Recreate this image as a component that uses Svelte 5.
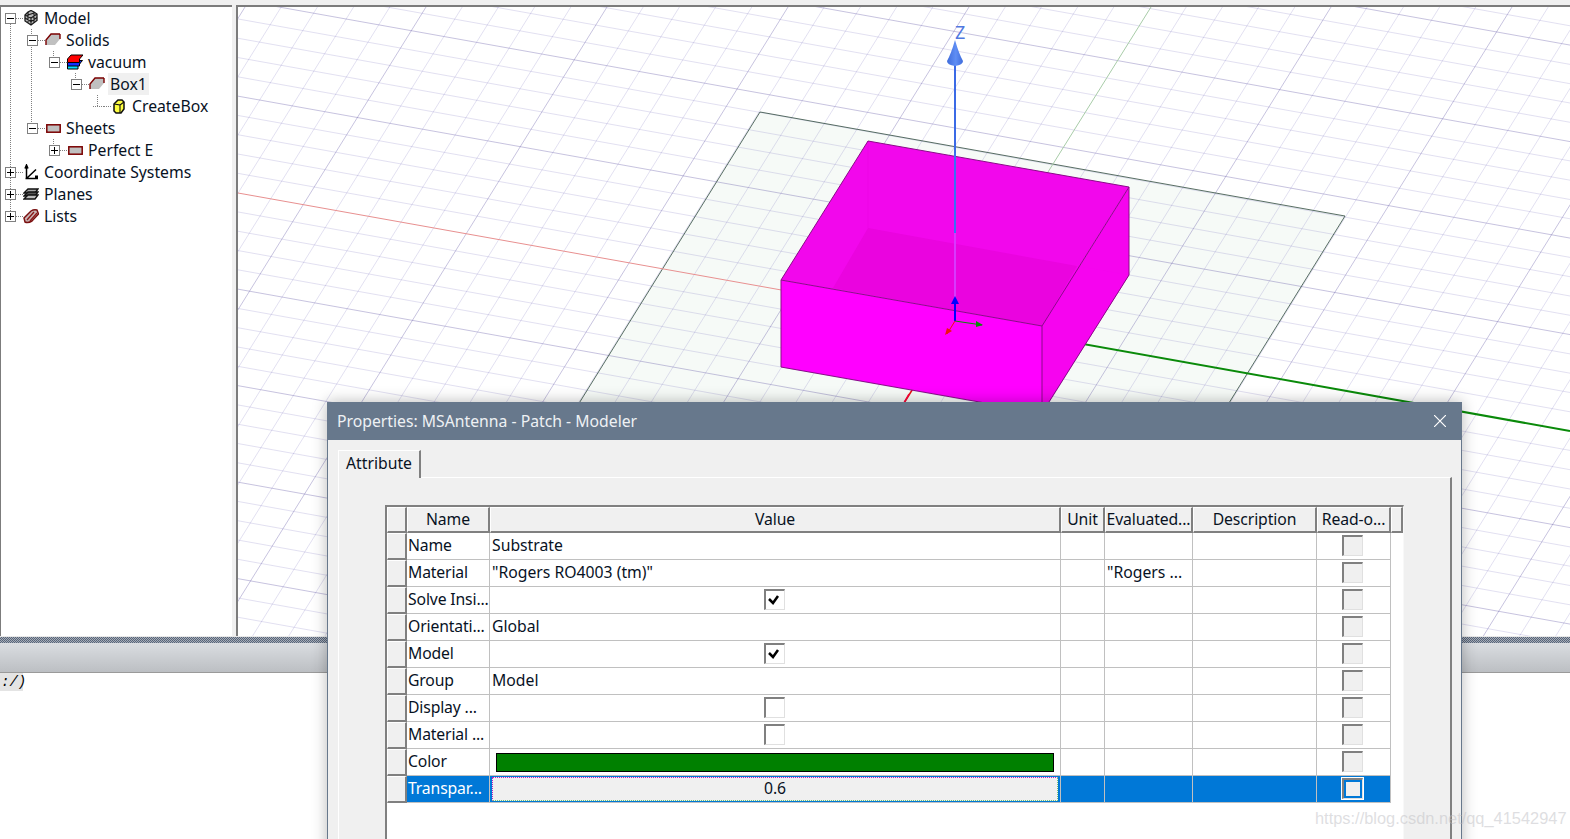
<script lang="ts">
  interface TreeNode {
    label: string;
    depth: number;
    icon: string;
    toggle: string;
    active?: boolean;
  }

  const tree: TreeNode[] = [
    { label: 'Model', depth: 0, icon: 'model', toggle: 'minus' },
    { label: 'Solids', depth: 1, icon: 'solid', toggle: 'minus' },
    { label: 'vacuum', depth: 2, icon: 'material', toggle: 'minus' },
    { label: 'Box1', depth: 3, icon: 'solid', toggle: 'minus', active: true },
    { label: 'CreateBox', depth: 4, icon: 'create', toggle: '' },
    { label: 'Sheets', depth: 1, icon: 'sheet', toggle: 'minus' },
    { label: 'Perfect E', depth: 2, icon: 'sheet', toggle: 'plus' },
    { label: 'Coordinate Systems', depth: 0, icon: 'coords', toggle: 'plus' },
    { label: 'Planes', depth: 0, icon: 'planes', toggle: 'plus' },
    { label: 'Lists', depth: 0, icon: 'lists', toggle: 'plus' },
  ];

  const guides = [
    [10.5, 24, 216],
    [31.5, 29, 128],
    [53.5, 51, 62],
    [53.5, 139, 150],
    [75.5, 73, 84],
    [97.5, 95, 106],
  ];

  const columns = [
    { label: 'Name' },
    { label: 'Value' },
    { label: 'Unit' },
    { label: 'Evaluated...' },
    { label: 'Description' },
    { label: 'Read-o...' },
  ];

  const rows = [
    { name: 'Name', value: 'Substrate', kind: 'text', evaluated: '' },
    { name: 'Material', value: '"Rogers RO4003 (tm)"', kind: 'text', evaluated: '"Rogers ...' },
    { name: 'Solve Insi...', value: '', kind: 'checked', evaluated: '' },
    { name: 'Orientati...', value: 'Global', kind: 'text', evaluated: '' },
    { name: 'Model', value: '', kind: 'checked', evaluated: '' },
    { name: 'Group', value: 'Model', kind: 'text', evaluated: '' },
    { name: 'Display ...', value: '', kind: 'unchecked', evaluated: '' },
    { name: 'Material ...', value: '', kind: 'unchecked', evaluated: '' },
    { name: 'Color', value: '', kind: 'color', evaluated: '' },
    { name: 'Transpar...', value: '0.6', kind: 'edit', evaluated: '' },
  ];

  // the view is orthographic, so both grid families are plain parallel lines
  const ox = 955;
  const oy = 321;
  const slopeA = 0.179;
  const slopeB = 1.61;
  const stepA = 19.3;
  const stepB = 36.2;

  const linesA: { y1: number; y2: number; major: boolean }[] = [];
  for (let k = -40; k <= 40; k++) {
    if (k === 0) continue;
    linesA.push({
      y1: oy + slopeA * (238 - ox) + k * stepA,
      y2: oy + slopeA * (1570 - ox) + k * stepA,
      major: k % 5 === 0,
    });
  }

  const linesB: { x1: number; x2: number; major: boolean }[] = [];
  for (let m = -30; m <= 30; m++) {
    if (m === 0) continue;
    linesB.push({
      x1: ox + (oy - 7) / slopeB + m * stepB,
      x2: ox + (oy - 636) / slopeB + m * stepB,
      major: m % 5 === 0,
    });
  }
</script>

<div class="page">
  <div class="main">
    <aside class="tree">
      <svg class="guides" viewBox="1 7 230 628" width="230" height="628">
        {#each guides as g}
          <line x1={g[0]} x2={g[0]} y1={g[1]} y2={g[2]} />
        {/each}
      </svg>
      {#each tree as node}
        <div class="node" style="padding-left: {4 + node.depth * 22}px">
          {#if node.toggle}
            <span class="toggle">
              <i class="bar"></i>
              {#if node.toggle === 'plus'}<i class="stem"></i>{/if}
            </span>
          {:else}
            <span class="toggle-none"></span>
          {/if}
          <span class="dots"></span>
          <svg class="icon" viewBox="0 0 16 16" width="16" height="16">
            {#if node.icon === 'model'}
              <path d="M2 5 5 2 8 0.500 11 2 14 4V10.500L8 15 2 11z" fill="#b8b8b8" stroke="#1a1a1a" stroke-width="1.300" />
              <path d="M2 5 8 8 14 4M8 8V15M5 2V12.500M11 2V12.500M2 8 8 11.500 14 7.500M5 5 11 3" fill="none" stroke="#1a1a1a" stroke-width="1.100" />
            {:else if node.icon === 'solid'}
              <path d="M1 13V8L6 2H15V7L10 13z" fill="#c0c0c0" />
              <path d="M1 13V8L6 2H15" fill="none" stroke="#7a0000" stroke-width="1.400" />
              <path d="M15 2V7" fill="none" stroke="#7a0000" stroke-width="1.400" />
            {:else if node.icon === 'material'}
              <path d="M0.500 12 3 9.500H13L11 12V15H0.500z" fill="#00e0ff" stroke="#000" stroke-width="1" />
              <path d="M0.500 9 3 6.500H15.500L12.500 10V12H0.500z" fill="#1030ff" stroke="#000" stroke-width="1" />
              <path d="M0.500 5 4 1H16L12.500 5V8.500H0.500z" fill="#ff0000" stroke="#000" stroke-width="1" />
            {:else if node.icon === 'create'}
              <path d="M3 6 7 2H11L13 4V11L10 15H5L3 13z" fill="#ffff40" stroke="#111" stroke-width="1.500" />
              <path d="M3 6 9 7V15M9 7 13 4" fill="none" stroke="#111" stroke-width="1.100" />
            {:else if node.icon === 'sheet'}
              <rect x="1.800" y="4.800" width="13.400" height="7.400" fill="#c0c0c0" stroke="#7a0000" stroke-width="1.500" />
            {:else if node.icon === 'coords'}
              <path d="M3.500 14.500V1.500M2 4.500 3.500 1 5 4.500M3.500 14.500 13 5.500M2.500 14.500H15" fill="none" stroke="#000" stroke-width="1.500" />
              <rect x="12" y="11.500" width="3" height="3" fill="#000" />
            {:else if node.icon === 'planes'}
              <path d="M1 7 5 3H15L12 7z" fill="#aaa" stroke="#111" stroke-width="1.400" />
              <path d="M1 10 5 6H15L12 10z" fill="#555" stroke="#111" stroke-width="1.400" />
              <path d="M1 13 5 9H15L12 13z" fill="#bbb" stroke="#111" stroke-width="1.400" />
            {:else if node.icon === 'lists'}
              <path d="M1 10 8 3Q11 1 14 2L15.500 6 9 13Q5 15.500 2 14z" fill="#c8b4b4" stroke="#7a1010" stroke-width="1.500" />
              <path d="M4 12 11 4M7 13 14 5" stroke="#8a1818" stroke-width="1.300" />
            {/if}
          </svg>
          <span class="node-label" class:active={node.active}>{node.label}</span>
        </div>
      {/each}
    </aside>

    <div class="viewport">
      <svg viewBox="238 7 1332 629" width="1332" height="629">
        <defs>
          <linearGradient id="cone" x1="0" x2="1" y1="0" y2="0">
            <stop offset="0" stop-color="#3f6cdc" />
            <stop offset="0.550" stop-color="#5f8ef4" />
            <stop offset="1" stop-color="#3f6cdc" />
          </linearGradient>
        </defs>

        <polygon points="760,112 1345,216 1082,640 432,640" fill="#f6faf7" />

        {#each linesA as l}
          <line x1="238" x2="1570" y1={l.y1} y2={l.y2} class={l.major ? 'grid major' : 'grid'} />
        {/each}
        {#each linesB as l}
          <line x1={l.x1} x2={l.x2} y1="7" y2="636" class={l.major ? 'grid major' : 'grid'} />
        {/each}

        <line x1="760" y1="112" x2="1345" y2="216" class="edge" />
        <line x1="760" y1="112" x2="432" y2="640" class="edge" />
        <line x1="1345" y1="216" x2="1082" y2="640" class="edge" />

        <line x1="238" y1="193" x2="955" y2="321" stroke="#e89090" stroke-width="1" />
        <line x1="1151" y1="7" x2="955" y2="321" stroke="#a8cca8" stroke-width="1" />
        <line x1="955" y1="321" x2="1570" y2="431" stroke="#0a8a0a" stroke-width="2" />
        <line x1="955" y1="321" x2="891" y2="424" stroke="#e81010" stroke-width="1.500" />

        <line x1="955" y1="64" x2="955" y2="153" stroke="#3b6ae6" stroke-width="2" />

        <polygon points="781,280 1042,326 1042,413 781,367" fill="#ff00ff" />
        <polygon points="868,141 1129,187 1042,326 781,280" fill="#f207ec" />
        <polygon points="1129,187 1129,275 1042,413 1042,326" fill="#f505ee" />
        <polygon points="1077,266 1129,275 1042,413 1042,326" fill="#f604ef" />
        <polygon points="868,228 1077,266 1042,326 833,288" fill="#ea04df" />
        <line x1="868" y1="141" x2="868" y2="228" stroke="#ee04e6" stroke-width="1" />

        <g fill="none" stroke="#8a0a88" stroke-width="1">
          <path d="M868 141 1129 187 1129 275 1042 413 781 367 781 280z" />
          <path d="M781 280 1042 326 1129 187M1042 326v87" />
        </g>

        <line x1="955" y1="153" x2="955" y2="233" stroke="#3a70f4" stroke-width="2" />
        <line x1="955" y1="233" x2="955" y2="300" stroke="#d838fc" stroke-width="2" />
        <line x1="955" y1="300" x2="955" y2="321" stroke="#0000ff" stroke-width="2" />
        <path d="M955 296 951 304H959z" fill="#0000ff" />
        <path d="M955 40Q951 54 947 61Q947 65 955 66Q963 65 963 61Q959 54 955 40z" fill="url(#cone)" />
        <line x1="955" y1="321" x2="982" y2="325" stroke="#0a8a0a" stroke-width="1" />
        <path d="M976 321 983 325 976 327z" fill="#0a8a0a" />
        <line x1="955" y1="321" x2="947" y2="334" stroke="#f01010" stroke-width="1" />
        <path d="M945 335 947 328 952 331z" fill="#f01010" />
        <line x1="909" y1="394" x2="901" y2="408" stroke="#ff0040" stroke-width="1.500" />

        <text x="955" y="38.500" class="axis-label">Z</text>
      </svg>
    </div>
  </div>

  <div class="splitter"></div>
  <div class="band"></div>
  <div class="log">
    <span class="log-line">:/)</span>
  </div>

  <section class="dialog">
    <header class="title">
      <span>Properties: MSAntenna - Patch - Modeler</span>
      <svg viewBox="0 0 12 12" width="12" height="12">
        <path d="M0 0 12 12M12 0 0 12" stroke="#fff" stroke-width="1.200" />
      </svg>
    </header>

    <div class="tabs">
      <div class="tab">Attribute</div>
    </div>

    <div class="pane">
      <div class="table">
        <div class="row head">
          <div class="rowhead"></div>
          {#each columns as col}
            <div class="th">{col.label}</div>
          {/each}
          <div class="th"></div>
        </div>

        {#each rows as row}
          <div class="row" class:selected={row.kind === 'edit'}>
            <div class="rowhead"></div>
            <div class="td name">{row.name}</div>
            <div class="td">
              {#if row.kind === 'text'}
                {row.value}
              {:else if row.kind === 'color'}
                <div class="swatch"></div>
              {:else if row.kind === 'edit'}
                <div class="editor">{row.value}</div>
              {:else}
                <div class="check">
                  {#if row.kind === 'checked'}
                    <svg viewBox="0 0 17 17" width="17" height="17">
                      <path d="M3 8 7 12 12 5" fill="none" stroke="#000" stroke-width="2.500" />
                    </svg>
                  {/if}
                </div>
              {/if}
            </div>
            <div class="td"></div>
            <div class="td">{row.evaluated}</div>
            <div class="td"></div>
            <div class="td">
              <div class="check readonly"></div>
            </div>
          </div>
        {/each}
      </div>
    </div>
  </section>

  <div class="watermark">https://blog.csdn.net/qq_41542947</div>
</div>

<style>
  :global(body) {
    margin: 0;
    overflow: hidden;
    background: #fff;
  }

  .page {
    position: relative;
    width: 1570px;
    height: 839px;
    overflow: hidden;
    display: flex;
    flex-direction: column;
    font-family: "Noto Sans", "Open Sans", sans-serif;
    font-size: 15.750px;
    color: #000;
    background: #f0f0f0;
  }

  .main {
    display: flex;
    height: 631px;
    margin-top: 5px;
    flex-shrink: 0;
  }

  .tree {
    position: relative;
    box-sizing: border-box;
    width: 232px;
    margin-right: 4px;
    background: #fff;
    border-top: 2px solid #7c7c7c;
    border-left: 1px solid #7c7c7c;
  }

  .guides {
    position: absolute;
    left: 0;
    top: 0;
  }

  .guides line {
    stroke: #808080;
    stroke-width: 1;
    stroke-dasharray: 1 1;
  }

  .node {
    position: relative;
    display: flex;
    align-items: center;
    height: 22px;
  }

  .toggle {
    position: relative;
    box-sizing: border-box;
    width: 11px;
    height: 11px;
    border: 1px solid #808080;
    background: #fff;
    flex-shrink: 0;
  }

  .bar {
    position: absolute;
    left: 1px;
    top: 4px;
    width: 7px;
    height: 1px;
    background: #000;
  }

  .stem {
    position: absolute;
    left: 4px;
    top: 1px;
    width: 1px;
    height: 7px;
    background: #000;
  }

  .toggle-none {
    width: 11px;
    flex-shrink: 0;
    border-top: 1px dotted #808080;
  }

  .dots {
    width: 7px;
    flex-shrink: 0;
    border-top: 1px dotted #808080;
  }

  .icon {
    flex-shrink: 0;
  }

  .node-label {
    margin-left: 3px;
    padding: 0 2px;
    height: 22px;
    line-height: 22px;
    color: #08121f;
    white-space: nowrap;
  }

  .node-label.active {
    background: #f0f0f0;
  }

  .viewport {
    flex: 1;
    background: #fff;
    border-top: 2px solid #7c7c7c;
    border-left: 2px solid #7c7c7c;
    overflow: hidden;
  }

  .viewport svg {
    display: block;
  }

  .grid {
    stroke: rgba(110, 100, 185, 0.2);
    stroke-width: 1;
  }

  .grid.major {
    stroke: rgba(90, 80, 160, 0.34);
  }

  .edge {
    stroke: #2f4a3c;
    stroke-width: 0.800;
  }

  .axis-label {
    font-family: "Noto Sans", sans-serif;
    font-size: 18px;
    fill: #5078e0;
  }

  .splitter {
    height: 7px;
    flex-shrink: 0;
    background: repeating-conic-gradient(#55657c 0 25%, #a8acb4 0 50%) 0 0 / 2px 2px;
    border-top: 1px solid #e8e8e8;
    box-sizing: border-box;
  }

  .band {
    height: 29px;
    flex-shrink: 0;
    background: linear-gradient(#dadde1, #bcbfc3);
    border-bottom: 1px solid #9a9a9a;
  }

  .log {
    flex: 1;
    background: #fff;
  }

  .log-line {
    display: block;
    width: 23px;
    height: 18px;
    line-height: 18px;
    padding-left: 1px;
    box-sizing: border-box;
    background: #e4e4e4;
    font-family: "Liberation Mono", monospace;
    font-style: italic;
    font-size: 14px;
  }

  .dialog {
    position: absolute;
    left: 327px;
    top: 402px;
    box-sizing: border-box;
    width: 1135px;
    height: 460px;
    background: #f0f0f0;
    border: 1px solid #67788c;
    border-top: none;
    box-shadow: 0 0 14px rgba(0, 0, 0, 0.28);
  }

  .title {
    display: flex;
    align-items: center;
    justify-content: space-between;
    height: 38px;
    padding: 0 15px 0 9px;
    background: #67788c;
    color: #eef1f4;
  }

  .tabs {
    display: flex;
    padding: 10px 0 0 10px;
  }

  .tab {
    position: relative;
    box-sizing: border-box;
    width: 83px;
    height: 28px;
    line-height: 25px;
    padding-left: 7px;
    color: #08121f;
    background: #f0f0f0;
    border-top: 1px solid #fff;
    border-left: 1px solid #fff;
    border-right: 2px solid #808080;
  }

  .pane {
    box-sizing: border-box;
    width: 1114px;
    height: 400px;
    margin-left: 10px;
    margin-top: -1px;
    padding: 27px 0 0 46px;
    border-top: 1px solid #fff;
    border-left: 1px solid #fff;
    border-right: 2px solid #808080;
  }

  .table {
    box-sizing: border-box;
    width: 1019px;
    height: 380px;
    background: #fff;
    border-top: 2px solid #808080;
    border-left: 2px solid #808080;
    border-right: 1px solid #f8f8f8;
  }

  .row {
    display: grid;
    grid-template-columns: 20px 83px 571px 44px 88px 124px 74px;
    grid-template-rows: 27px;
    height: 27px;
    line-height: 24px;
    color: #08121f;
  }

  .row.head {
    grid-template-columns: 20px 83px 571px 44px 88px 124px 74px 12px;
    grid-template-rows: 26px;
    height: 26px;
    line-height: 22px;
  }

  .rowhead,
  .th {
    box-sizing: border-box;
    background: #f0f0f0;
    border-top: 1px solid #fff;
    border-left: 1px solid #fff;
    border-right: 2px solid #808080;
    border-bottom: 2px solid #808080;
  }

  .th {
    text-align: center;
    white-space: nowrap;
    overflow: hidden;
    letter-spacing: -0.1px;
  }

  .td {
    box-sizing: border-box;
    display: flex;
    align-items: center;
    padding-left: 2px;
    padding-bottom: 2px;
    border-right: 1px solid #c0c0c0;
    border-bottom: 1px solid #c0c0c0;
    white-space: nowrap;
  }

  .td.name {
    padding-left: 1px;
    letter-spacing: -0.15px;
  }

  .selected .td {
    background: #0078d7;
    color: #fff;
  }

  .selected .td:nth-child(3) {
    padding-bottom: 0;
  }

  .check {
    box-sizing: border-box;
    width: 21px;
    height: 21px;
    margin: 1px auto 0;
    position: relative;
    left: -2px;
    background: #fff;
    border-top: 2px solid #808080;
    border-left: 2px solid #808080;
    border-right: 1px solid #e0e0e0;
    border-bottom: 1px solid #e0e0e0;
  }

  .check svg {
    display: block;
  }

  .check.readonly {
    background: #f0f0f0;
  }

  .selected .check.readonly {
    outline: 1px solid #fff;
    box-shadow: inset 0 0 0 2px #0078d7;
  }

  .swatch {
    box-sizing: border-box;
    width: 558px;
    height: 19px;
    margin: 2px 0 0 4px;
    background: #008000;
    border: 1px solid #000;
  }

  .editor {
    box-sizing: border-box;
    width: 566px;
    height: 24px;
    line-height: 21px;
    text-align: center;
    background: #f0f0f0;
    color: #08121f;
    border: 1px dotted #d0d0d0;
    border-top-color: #c020c0;
    border-left-color: #c020c0;
    border-right-color: #70c070;
    border-bottom-color: #70c070;
  }

  .watermark {
    position: absolute;
    left: 1315px;
    top: 809px;
    font-family: "Liberation Sans", Arial, sans-serif;
    font-size: 16.400px;
    color: rgba(190, 190, 195, 0.5);
    white-space: nowrap;
  }
</style>
